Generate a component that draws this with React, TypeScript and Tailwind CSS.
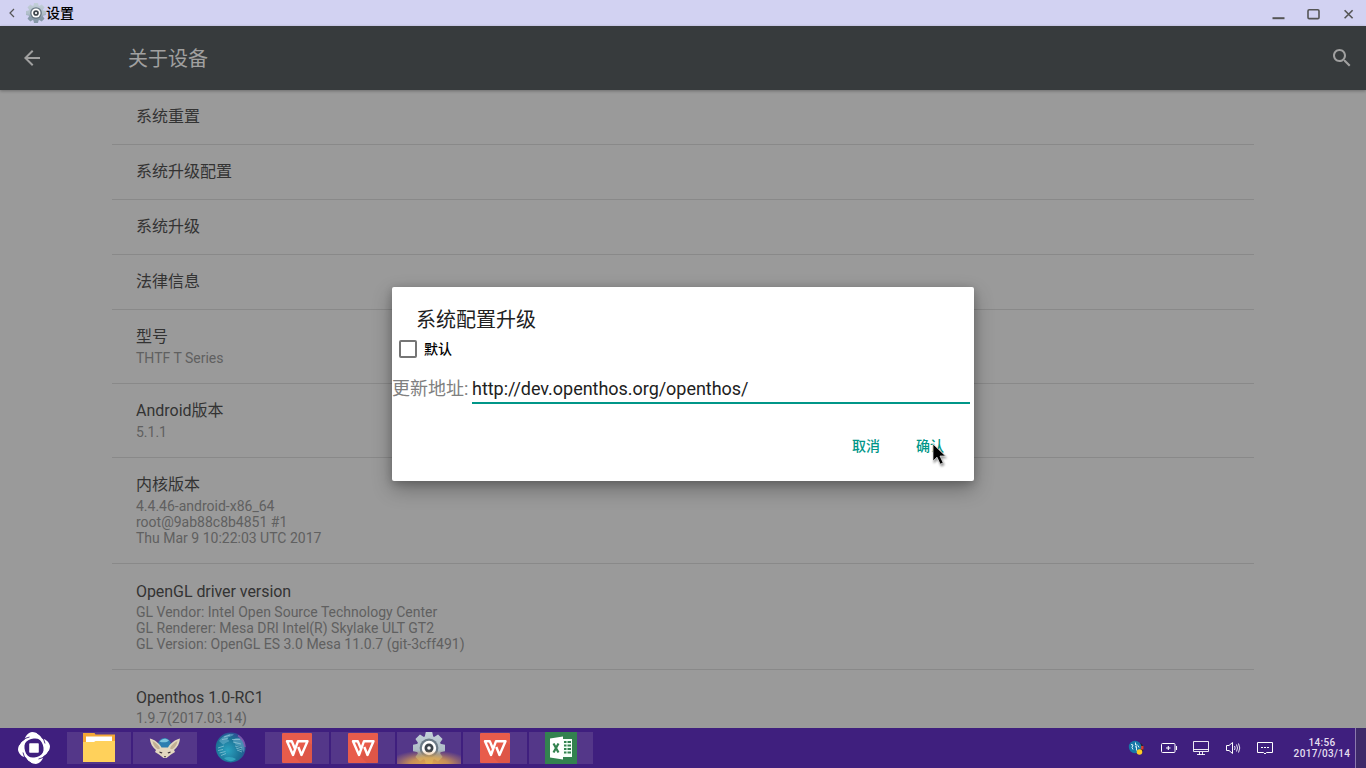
import React from "react";

type Row = { title: string; lines?: string[]; latin?: boolean };

const rows: Row[] = [
  { title: "系统重置" },
  { title: "系统升级配置" },
  { title: "系统升级" },
  { title: "法律信息" },
  { title: "型号", lines: ["THTF T Series"] },
  { title: "Android版本", lines: ["5.1.1"] },
  { title: "内核版本", lines: ["4.4.46-android-x86_64", "root@9ab88c8b4851 #1", "Thu Mar 9 10:22:03 UTC 2017"] },
  {
    title: "OpenGL driver version",
    latin: true,
    lines: [
      "GL Vendor: Intel Open Source Technology Center",
      "GL Renderer: Mesa DRI Intel(R) Skylake ULT GT2",
      "GL Version: OpenGL ES 3.0 Mesa 11.0.7 (git-3cff491)",
    ],
  },
  { title: "Openthos 1.0-RC1", latin: true, lines: ["1.9.7(2017.03.14)"] },
];

const teeth = [0, 45, 90, 135, 180, 225, 270, 315];

function Gear({ id, className }: { id: string; className: string }) {
  return (
    <svg viewBox="0 0 32 32" className={className}>
      <defs>
        <linearGradient id={id} x1="0" y1="0" x2="0" y2="32" gradientUnits="userSpaceOnUse">
          <stop offset="0" stopColor="#c3d0d8" />
          <stop offset="0.55" stopColor="#b0bec8" />
          <stop offset="0.7" stopColor="#8799a8" />
          <stop offset="1" stopColor="#8799a8" />
        </linearGradient>
        <mask id={id + "-mask"}>
          <g fill="#fff">
            {teeth.map((a) => (
              <path key={a} d="M12.8 0h6.400l1.300 6h-9z" transform={"rotate(" + a + " 16 16)"} />
            ))}
            <circle cx="16" cy="16" r="12.300" />
          </g>
        </mask>
      </defs>
      <rect width="32" height="32" fill={"url(#" + id + ")"} mask={"url(#" + id + "-mask)"} />
      <circle cx="16" cy="16" r="9.400" fill="#6b7a86" />
      <circle cx="16" cy="16" r="7.200" fill="#fff" />
      <circle cx="16" cy="16" r="4.500" fill="#3c444b" />
      <circle cx="16" cy="16" r="1.800" fill="#fff" />
    </svg>
  );
}

function StartLogo() {
  return (
    <svg viewBox="0 0 32 32" className="h-8 w-8">
      <g fill="#fff">
        {[0, 90, 180, 270].map((a) => (
          <path
            key={a}
            d="M6.500 11.500C5.800 6 8.500 1.200 14 0C19.500 0 24.300 4.500 26 11.500C23 7.500 19.500 6 15.800 6.500C12 7 9 8.500 6.500 11.500Z"
            transform={"rotate(" + a + " 16 16)"}
          />
        ))}
        <rect x="11.200" y="11.200" width="9.600" height="9.600" rx="0.800" />
      </g>
      <g fill="none" stroke="#3f1f7e" strokeWidth="0.900">
        {[0, 90, 180, 270].map((a) => (
          <path key={a} d="M19 1C23 2.800 26 6.500 27 11.500" transform={"rotate(" + a + " 16 16)"} />
        ))}
      </g>
    </svg>
  );
}

function Folder() {
  return (
    <svg viewBox="0 0 32 32" className="h-8 w-8">
      <path d="M0 1h11.500l1 1.500H32V12H0z" fill="#f4a836" />
      <path d="M3 4.500h26V12H3z" fill="#fff" />
      <path d="M0 10h11l1.500-1H32V30H0z" fill="#ffd15b" />
    </svg>
  );
}

function Fox() {
  return (
    <svg viewBox="0 0 32 32" className="h-8 w-8">
      <circle cx="15.500" cy="12.500" r="6.500" fill="#2d7fb0" />
      <path d="M10.500 9.500c3-3.500 6.500-3.500 9.500-1-2 2-6 2.500-9.500 1z" fill="#7cc4dc" />
      <path d="M0.800 6.500C5.500 7.500 10 11 12.500 15.500h6.500C21.500 11 26.500 7.500 31 6.500c-.5 5-2.500 9-6 11.500L26 20l-4 2.500L17.500 26h-3L10 22.500 6 20l1-2C3.500 15.500 1.300 11.500 0.800 6.500z" fill="#e3d8c0" />
      <path d="M3.500 9c4 2 6.500 4.500 7.500 7.500l-2 .8C6 15.800 4 13 3.500 9zM28.500 9c-4 2-6.500 4.500-7.500 7.500l2 .8c3-1.500 5-4.300 5.500-8.300z" fill="#c2b095" />
      <path d="M10.500 19.500l3 1-.8 1-2.200-.8zM21.500 19.500l-3 1 .8 1 2.200-.8zM15 24h2l-1 1.800z" fill="#3a3034" />
    </svg>
  );
}

function Globe() {
  return (
    <svg viewBox="0 0 32 32" className="h-8 w-8">
      <defs>
        <radialGradient id="globe" cx="0.4" cy="0.6" r="0.62">
          <stop offset="0" stopColor="#2ba3c0" />
          <stop offset="0.7" stopColor="#1b7094" />
          <stop offset="1" stopColor="#2d4f95" />
        </radialGradient>
      </defs>
      <circle cx="15.700" cy="15.500" r="15" fill="url(#globe)" />
      <path d="M4 9C8 3 14 1 19 2.500c-2 2-5 2-7 4 0 2 3 1 2 3-2 1-4 1-5 3-2 0-3-2-5-3.500zM18 8c3-3 7-3 9 0 3 4 3 9 2 12-2-1-2-5-5-6-3 0-5-3-6-6z" fill="#6bb2ce" opacity="0.55" />
      <path d="M3 16l6-2M3 18.500l5-1M4.500 21l6-1.500M6 23.500l5-2M18 10l8 2M17 7.500l8 0M20 14l7 2M9 5l6-2M7 7.500l6-1M22 18l5 2M21 16l6 2" stroke="#b4deea" strokeWidth="0.700" opacity="0.75" />
      <path d="M9 26c4-2 9-1 12 1-3 3-8 3-12-1z" fill="#43bdd0" opacity="0.6" />
      <path d="M23 3.500c4 2.500 6.500 6.500 7 11.500" stroke="#9257b2" strokeWidth="1.600" fill="none" opacity="0.8" />
    </svg>
  );
}

function Wps() {
  return (
    <svg viewBox="0 0 32 32" className="h-8 w-8">
      <rect x="1" y="1" width="30" height="30" rx="1" fill="#e85c4b" />
      <path d="M13 24l14-15 4 4v18H20z" fill="#cf4d40" opacity="0.4" />
      <path d="M14.500 18L10.800 9.200H6L12 23L17 9.200H26.500L20.500 23L17.300 15" fill="none" stroke="#fff" strokeWidth="2.400" strokeLinejoin="round" />
    </svg>
  );
}

function Excel() {
  return (
    <svg viewBox="0 0 32 32" className="h-8 w-8">
      <path d="M0 0h32v32H0z" fill="#33824f" />
      <path d="M17 7h10v18H17z" fill="#f5fff8" />
      <path d="M19 9h2.500v2H19zm3.500 0H26v2h-3.500zM19 12.500h2.500v2H19zm3.500 0H26v2h-3.500zM19 16h2.500v2H19zm3.500 0H26v2h-3.500zM19 19.500h2.500v2H19zm3.500 0H26v2h-3.500z" fill="#33824f" />
      <path d="M5 6.500L18 4.500v23L5 25.500z" fill="#fff" />
      <path d="M8.500 11.500l5 9M13.500 11.500l-5 9" stroke="#33824f" strokeWidth="2.200" />
    </svg>
  );
}

const tasks: { icon: React.ReactNode; kind: "open" | "plain" | "active" }[] = [
  { icon: <Folder />, kind: "open" },
  { icon: <Fox />, kind: "open" },
  { icon: <Globe />, kind: "plain" },
  { icon: <Wps />, kind: "open" },
  { icon: <Wps />, kind: "open" },
  { icon: <Gear id="gear-task" className="h-8 w-8" />, kind: "active" },
  { icon: <Wps />, kind: "open" },
  { icon: <Excel />, kind: "open" },
];

const taskStyle = {
  open: "bg-[#543789]",
  plain: "",
  active: "bg-[#543789]",
};

function TitleBar() {
  return (
    <header className="flex h-[26px] shrink-0 items-center bg-[#d2d2f2]">
      <svg viewBox="0 0 8 10" className="ml-2 h-2.5 w-2 fill-none stroke-[#555]">
        <path d="M6 1L2 5l4 4" strokeWidth="1.200" />
      </svg>
      <Gear id="gear-title" className="ml-2.5 h-5 w-5" />
      <span className="text-sm leading-5 font-medium text-black">设置</span>
      <svg viewBox="0 0 90 26" className="mr-2 ml-auto h-[26px] w-[90px] fill-none stroke-[#555]">
        <path d="M4.500 18.200h12" strokeWidth="2" />
        <rect x="40" y="9.800" width="11" height="8.800" rx="1.200" strokeWidth="1.600" />
        <path d="M76.600 10.300l8 8M84.600 10.300l-8 8" strokeWidth="1.600" />
      </svg>
    </header>
  );
}

function ActionBar() {
  return (
    <div className="z-10 flex h-16 shrink-0 items-center bg-[#373b3d] text-[#a0a0a0] shadow-[0_1px_3px_rgba(0,0,0,0.3)]">
      <svg viewBox="0 0 24 24" className="ml-5 h-6 w-6 fill-current">
        <path d="M20 11H7.830l5.590-5.590L12 4l-8 8 8 8 1.410-1.410L7.830 13H20v-2z" />
      </svg>
      <h1 className="mt-0.5 ml-[84px] text-xl leading-6">关于设备</h1>
      <svg viewBox="0 0 24 24" className="mr-3 ml-auto h-6 w-6 fill-current">
        <path d="M15.500 14h-.79l-.28-.27C15.410 12.590 16 11.110 16 9.500 16 5.910 13.090 3 9.500 3S3 5.910 3 9.500 5.910 16 9.500 16c1.610 0 3.090-.59 4.230-1.570l.27.28v.79l5 4.990L20.490 19l-4.990-5zm-6 0C7.010 14 5 11.990 5 9.500S7.010 5 9.500 5 14 7.010 14 9.500 11.990 14 9.500 14z" />
      </svg>
    </div>
  );
}

function Tray() {
  return (
    <div className="ml-auto flex h-full items-center">
      <svg viewBox="0 0 16 16" className="h-4 w-4">
        <ellipse cx="12.500" cy="8.500" rx="3" ry="5" fill="#292431" />
        <path d="M12 6h3.500v3.500H12z" fill="#d93931" />
        <circle cx="7" cy="7" r="6.200" fill="#1678a7" />
        <path d="M3 4.500l2 .5-1 2.500 1 2M7.500 2.500v2.500h2M7 7l1.500-.5v4M10 5.500l1 2" stroke="#d9eff6" fill="none" />
        <circle cx="11.500" cy="12" r="2.800" fill="#ffcc25" />
      </svg>
      <svg viewBox="0 0 18 16" className="ml-4 h-4 w-[18px] fill-none stroke-white">
        <rect x="1.500" y="3.500" width="13.500" height="9" rx="1" />
        <path d="M16.500 6v4M6 8h4.500M8.300 6v4" strokeWidth="1.100" />
      </svg>
      <svg viewBox="0 0 18 16" className="ml-[14px] h-4 w-[18px] fill-none stroke-white">
        <path d="M1.500 1.500h15v10h-15zM1.500 9.500h15M7.500 12v3M10.500 12v3M5 14.500h8" strokeWidth="0.900" />
      </svg>
      <svg viewBox="0 0 18 16" className="ml-[14px] h-4 w-[18px] fill-none stroke-white">
        <path d="M2.500 5.500H5L8.500 2.500v11L5 10.500H2.500z" />
        <path d="M10.500 6q1.200 2 0 4M12.500 4.500q2 3.500 0 7M14.500 3.500q2.500 4.500 0 9" strokeWidth="0.900" />
      </svg>
      <svg viewBox="0 0 18 16" className="ml-[14px] h-4 w-[18px] fill-none stroke-white">
        <path d="M1.500 2.500h15v10h-6L9 14l-1.500-1.500h-6z" />
        <path d="M5 7.500h2M8 7.500h2M11 7.500h2" strokeWidth="1.200" />
      </svg>
      <div className="ml-[19px] w-[58px] text-center font-[Roboto,sans-serif] text-[10px] leading-[11px] font-medium tracking-[0.35px] text-[#e5dff0]">
        <div>14:56</div>
        <div>2017/03/14</div>
      </div>
      <div className="ml-1 h-full w-[11px] border-l border-[#8b79ad] bg-[#3e2a69]" />
    </div>
  );
}

function Taskbar() {
  return (
    <footer className="z-20 flex h-10 shrink-0 items-center bg-[#3f1f7e]">
      <div className="mr-[17px] ml-[18px]"><StartLogo /></div>
      <div className="flex gap-0.5">
        {tasks.map((t, i) => (
          <div key={i} className={"relative flex h-8 w-16 items-center justify-center " + taskStyle[t.kind]}>
            {t.icon}
            {t.kind === "active" && (
              <span className="absolute inset-0 bg-[radial-gradient(ellipse_42px_14px_at_50%_100%,rgba(240,180,70,0.9)_0%,rgba(235,172,72,0.75)_45%,rgba(220,155,85,0.35)_75%,transparent_100%)]" />
            )}
          </div>
        ))}
      </div>
      <Tray />
    </footer>
  );
}

function UpgradeDialog() {
  return (
    <section className="absolute top-[287px] left-[392px] z-30 flex h-[194px] w-[582px] flex-col rounded-xs bg-white shadow-[0_8px_20px_rgba(0,0,0,0.3),0_2px_8px_rgba(0,0,0,0.2)]">
      <h2 className="mt-[21px] ml-6 text-xl leading-6 text-[#212121]">系统配置升级</h2>
      <label className="mt-[7px] ml-[7px] flex h-5 items-center">
        <span className="h-[18px] w-[18px] rounded-xs border-2 border-[#757575]" />
        <span className="ml-[7px] text-sm font-medium text-black">默认</span>
      </label>
      <div className="mt-[18px] flex h-[27px]">
        <span className="w-20 text-lg leading-6 whitespace-nowrap text-[#808080]">更新地址:</span>
        <div className="h-[27px] w-[498px] border-b-2 border-[#009688] text-lg leading-6 tracking-[-0.03px] text-[#212121]">http://dev.openthos.org/openthos/</div>
      </div>
      <div className="mt-8 mr-[30px] flex justify-end gap-9 text-sm leading-5 font-medium text-[#009688]">
        <span>取消</span>
        <span>确认</span>
      </div>
    </section>
  );
}

function rowPadding(r: Row) {
  if (!r.lines) return "py-[17px]";
  return r.latin ? "pt-[18px] pb-[17px]" : "pt-[17px] pb-[17px]";
}

function titleMargin(r: Row) {
  if (!r.lines) return "";
  return r.latin ? "mb-0.5 tracking-[-0.06px]" : "mb-[3px]";
}

export default function App() {
  return (
    <main className="relative flex h-[768px] w-[1366px] flex-col overflow-hidden bg-[#9a9a9a] font-[Roboto,'Noto_Sans_CJK_SC',sans-serif] select-none">
      <TitleBar />
      <ActionBar />
      <div className="min-h-0 flex-1 overflow-hidden px-28">
        {rows.map((r) => (
          <div key={r.title} className={"border-b border-[#898989] px-6 " + rowPadding(r)}>
            <div className={"text-base leading-5 text-[#333] " + titleMargin(r)}>{r.title}</div>
            {r.lines?.map((l) => (
              <div key={l} className="text-sm leading-4 text-[#606060]">{l}</div>
            ))}
          </div>
        ))}
      </div>
      <Taskbar />
      <UpgradeDialog />
      <svg viewBox="0 0 18 28" className="absolute top-[441px] left-[930px] z-40 h-7 w-[18px] drop-shadow-[1px_2px_1px_rgba(0,0,0,0.4)]">
        <path d="M3 3v17l4-3.800 3.200 7 3-1.300-3.200-6.900h5.500z" fill="#000" stroke="#eee" strokeWidth="0.700" />
      </svg>
    </main>
  );
}
